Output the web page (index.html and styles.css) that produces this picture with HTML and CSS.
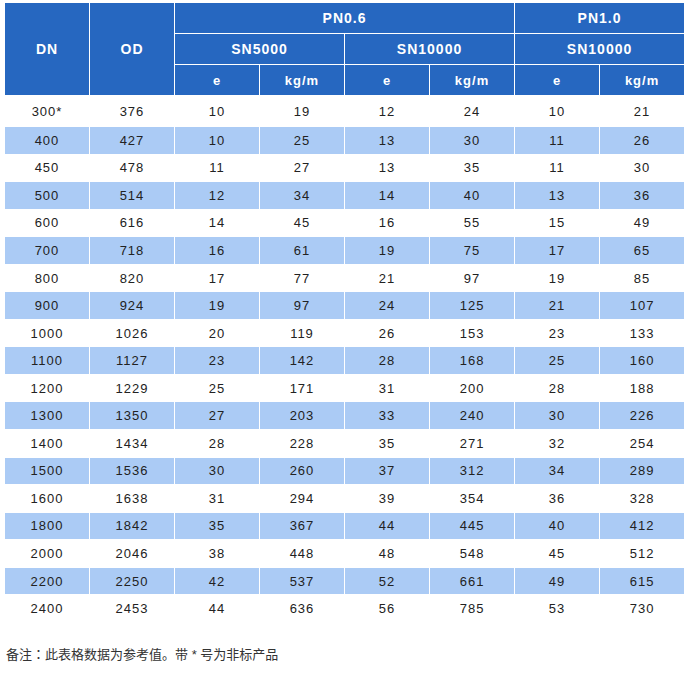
FILE: index.html
```html
<!DOCTYPE html>
<html lang="zh">
<head>
<meta charset="utf-8">
<title>规格表</title>
<link rel="stylesheet" href="styles.css">
</head>
<body>
<table class="spec">
  <colgroup>
    <col class="c"><col class="c"><col class="c"><col class="c"><col class="c"><col class="c"><col class="c"><col class="c">
  </colgroup>
  <thead>
    <tr class="h1">
      <th rowspan="3" class="big">DN</th>
      <th rowspan="3" class="big">OD</th>
      <th colspan="4">PN0.6</th>
      <th colspan="2">PN1.0</th>
    </tr>
    <tr class="h2">
      <th colspan="2">SN5000</th>
      <th colspan="2">SN10000</th>
      <th colspan="2">SN10000</th>
    </tr>
    <tr class="h3">
      <th>e</th><th>kg/m</th><th>e</th><th>kg/m</th><th>e</th><th>kg/m</th>
    </tr>
  </thead>
  <tbody>
    <tr class="first"><td>300*</td><td>376</td><td>10</td><td>19</td><td>12</td><td>24</td><td>10</td><td>21</td></tr>
    <tr class="alt"><td>400</td><td>427</td><td>10</td><td>25</td><td>13</td><td>30</td><td>11</td><td>26</td></tr>
    <tr><td>450</td><td>478</td><td>11</td><td>27</td><td>13</td><td>35</td><td>11</td><td>30</td></tr>
    <tr class="alt"><td>500</td><td>514</td><td>12</td><td>34</td><td>14</td><td>40</td><td>13</td><td>36</td></tr>
    <tr><td>600</td><td>616</td><td>14</td><td>45</td><td>16</td><td>55</td><td>15</td><td>49</td></tr>
    <tr class="alt"><td>700</td><td>718</td><td>16</td><td>61</td><td>19</td><td>75</td><td>17</td><td>65</td></tr>
    <tr><td>800</td><td>820</td><td>17</td><td>77</td><td>21</td><td>97</td><td>19</td><td>85</td></tr>
    <tr class="alt"><td>900</td><td>924</td><td>19</td><td>97</td><td>24</td><td>125</td><td>21</td><td>107</td></tr>
    <tr><td>1000</td><td>1026</td><td>20</td><td>119</td><td>26</td><td>153</td><td>23</td><td>133</td></tr>
    <tr class="alt"><td>1100</td><td>1127</td><td>23</td><td>142</td><td>28</td><td>168</td><td>25</td><td>160</td></tr>
    <tr><td>1200</td><td>1229</td><td>25</td><td>171</td><td>31</td><td>200</td><td>28</td><td>188</td></tr>
    <tr class="alt"><td>1300</td><td>1350</td><td>27</td><td>203</td><td>33</td><td>240</td><td>30</td><td>226</td></tr>
    <tr><td>1400</td><td>1434</td><td>28</td><td>228</td><td>35</td><td>271</td><td>32</td><td>254</td></tr>
    <tr class="alt"><td>1500</td><td>1536</td><td>30</td><td>260</td><td>37</td><td>312</td><td>34</td><td>289</td></tr>
    <tr><td>1600</td><td>1638</td><td>31</td><td>294</td><td>39</td><td>354</td><td>36</td><td>328</td></tr>
    <tr class="alt"><td>1800</td><td>1842</td><td>35</td><td>367</td><td>44</td><td>445</td><td>40</td><td>412</td></tr>
    <tr><td>2000</td><td>2046</td><td>38</td><td>448</td><td>48</td><td>548</td><td>45</td><td>512</td></tr>
    <tr class="alt"><td>2200</td><td>2250</td><td>42</td><td>537</td><td>52</td><td>661</td><td>49</td><td>615</td></tr>
    <tr><td>2400</td><td>2453</td><td>44</td><td>636</td><td>56</td><td>785</td><td>53</td><td>730</td></tr>
  </tbody>
</table>
<p class="note">备注<span class="punct" lang="ja">：</span>此表格数据为参考值。带 * 号为非标产品</p>
</body>
</html>
```
FILE: styles.css
```css
html, body {
  margin: 0;
  padding: 0;
  background: #ffffff;
}
body {
  font-family: "Liberation Sans", Arial, "Noto Sans CJK SC", sans-serif;
}
.spec {
  border-collapse: separate;
  border-spacing: 1px;
  margin: 2px 0 0 4px;
  table-layout: fixed;
  width: 681px;
  background: #ffffff;
}
.spec col.c {
  width: 84px;
}
.spec th {
  background: #2667c0;
  color: #ffffff;
  font-weight: bold;
  font-size: 14px;
  letter-spacing: 1px;
  height: 30px;
  padding: 0;
  text-align: center;
  vertical-align: middle;
}
.spec .h3 th {
  font-size: 13px;
}
.spec td {
  color: #222222;
  font-size: 13px;
  letter-spacing: 1px;
  height: 26.56px;
  padding: 0;
  text-align: center;
  vertical-align: middle;
  background: #ffffff;
}
.spec tr.first td {
  height: 30px;
}
.spec tr.alt td {
  background: #abcbf5;
}
.note {
  margin: 22px 0 0 6px;
  font-family: "Liberation Sans", "Noto Sans CJK SC", sans-serif;
  font-size: 13px;
  line-height: 18px;
  color: #333333;
}
.note .punct {
  font-family: "Noto Sans CJK JP", sans-serif;
}
```
